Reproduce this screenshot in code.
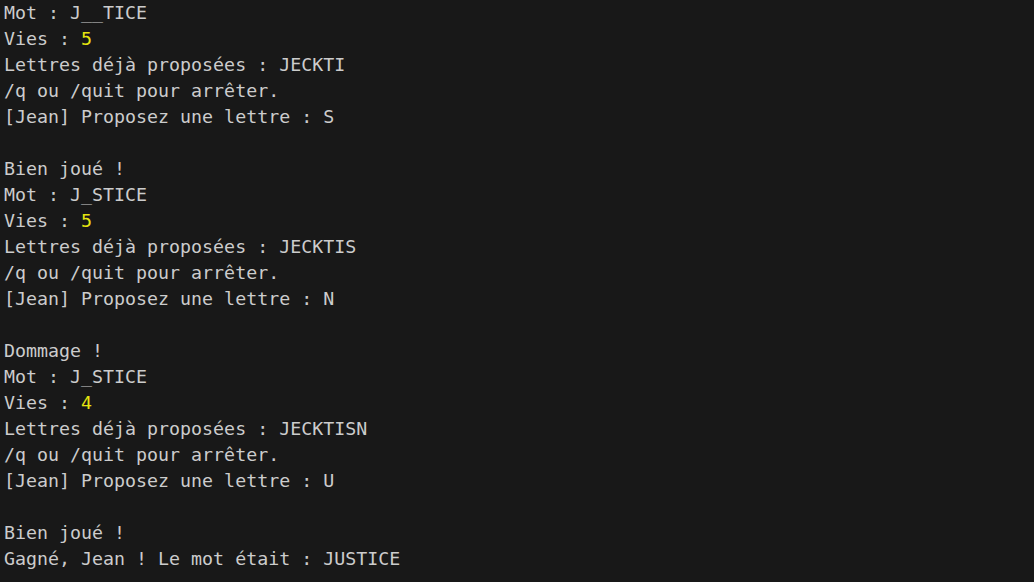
import React from 'react';

type Line = { text?: string; vies?: string };

const lines: Line[] = [
  { text: 'Mot : J__TICE' },
  { vies: '5' },
  { text: 'Lettres déjà proposées : JECKTI' },
  { text: '/q ou /quit pour arrêter.' },
  { text: '[Jean] Proposez une lettre : S' },
  { text: '' },
  { text: 'Bien joué !' },
  { text: 'Mot : J_STICE' },
  { vies: '5' },
  { text: 'Lettres déjà proposées : JECKTIS' },
  { text: '/q ou /quit pour arrêter.' },
  { text: '[Jean] Proposez une lettre : N' },
  { text: '' },
  { text: 'Dommage !' },
  { text: 'Mot : J_STICE' },
  { vies: '4' },
  { text: 'Lettres déjà proposées : JECKTISN' },
  { text: '/q ou /quit pour arrêter.' },
  { text: '[Jean] Proposez une lettre : U' },
  { text: '' },
  { text: 'Bien joué !' },
  { text: 'Gagné, Jean ! Le mot était : JUSTICE' },
];

export default function App() {
  return (
    <div className="w-[1034px] h-[582px] overflow-hidden bg-[#181818] text-[#cccccc] pl-[4px] font-['DejaVu_Sans_Mono',monospace] text-[18.3px] leading-[26px]">
      {lines.map((l, i) => (
        <div key={i} className="h-[26px] whitespace-pre">
          {l.vies ? (
            <>
              Vies : <span className="text-[#e5e510]">{l.vies}</span>
            </>
          ) : (
            l.text
          )}
        </div>
      ))}
    </div>
  );
}
